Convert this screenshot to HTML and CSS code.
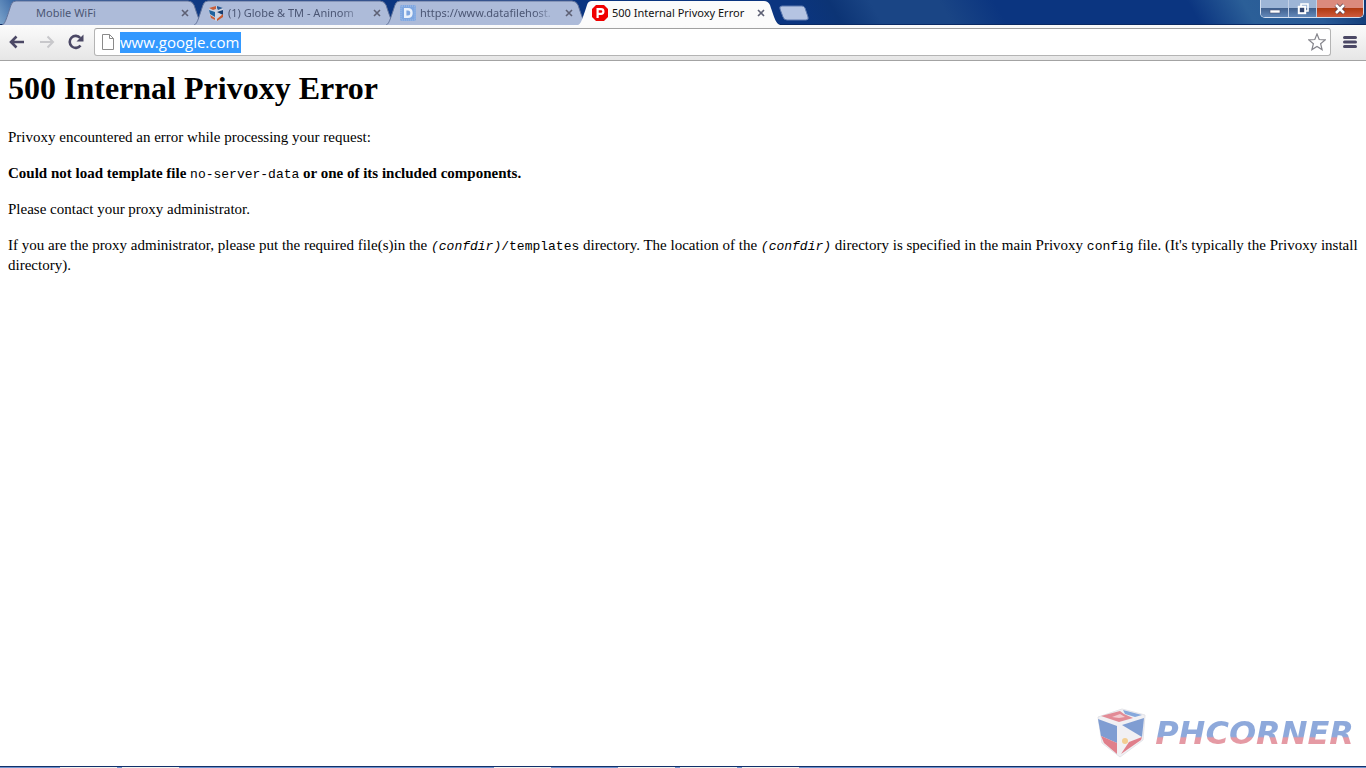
FILE: index.html
```
<!DOCTYPE html>
<html lang="en">
<head>
<meta charset="utf-8">
<title>500 Internal Privoxy Error</title>
<link rel="stylesheet" href="styles.css">
</head>
<body>
<div class="window">
  <header class="titlebar">
    <nav class="tabs" aria-label="Tabs">
      <div class="tab">
        <svg class="tab-shape" viewBox="0 0 202 25" preserveAspectRatio="none"><path d="M0 25C3 24 4 20 9 5Q10 1 14 1H186Q190 1 192 5C197 20 198 23 202 25"/></svg>
        <span class="favicon"></span>
        <span class="tab-title">Mobile WiFi</span>
        <button class="tab-close" aria-label="Close tab"><svg viewBox="0 0 8 8"><path d="M1 1L7 7M7 1L1 7"/></svg></button>
      </div>
      <div class="tab">
        <svg class="tab-shape" viewBox="0 0 202 25" preserveAspectRatio="none"><path d="M0 25C3 24 4 20 9 5Q10 1 14 1H186Q190 1 192 5C197 20 198 23 202 25"/></svg>
        <svg class="favicon" viewBox="0 0 16 16"><path fill="#ccd3e2" d="M1 3L8 1L15 3V11L8 16L2 12Z"/><path fill="#c75f3c" d="M1 3L8 1L8 4L5 5Z"/><path fill="#285994" d="M9 1L15 3L10 5L9 3Z"/><path fill="#1f639f" d="M1 5L7 7V12L2 9Z"/><path fill="#c75f3c" d="M2 10L7 13V15L3 13Z"/><path fill="#173e70" d="M9 7L15 5V10Z"/><path fill="#c8592e" d="M9 14L15 9V12L9 16Z"/></svg>
        <span class="tab-title fade">(1) Globe &amp; TM - Aninom</span>
        <button class="tab-close" aria-label="Close tab"><svg viewBox="0 0 8 8"><path d="M1 1L7 7M7 1L1 7"/></svg></button>
      </div>
      <div class="tab">
        <svg class="tab-shape" viewBox="0 0 202 25" preserveAspectRatio="none"><path d="M0 25C3 24 4 20 9 5Q10 1 14 1H186Q190 1 192 5C197 20 198 23 202 25"/></svg>
        <svg class="favicon" viewBox="0 0 16 16"><rect width="16" height="16" rx="2" fill="#7ea6e0"/><rect x="1" y="1" width="14" height="14" rx="1" fill="none" stroke="#a9c3ea" stroke-dasharray="1 1"/><path fill="none" stroke="#eaf1fb" stroke-width="2.4" d="M5.2 4.2H8Q11.5 4.2 11.5 8T8 11.8H5.2Z"/></svg>
        <span class="tab-title fade">https://www.datafilehost.</span>
        <button class="tab-close" aria-label="Close tab"><svg viewBox="0 0 8 8"><path d="M1 1L7 7M7 1L1 7"/></svg></button>
      </div>
      <div class="tab active">
        <svg class="tab-shape" viewBox="0 0 202 25" preserveAspectRatio="none"><path d="M0 25C3 24 4 20 9 5Q10 1 14 1H186Q190 1 192 5C197 20 198 23 202 25"/></svg>
        <svg class="favicon" viewBox="0 0 16 16"><path fill="#f00000" d="M4 0H12L16 4V12L12 16H4L0 12V4Z"/><path fill="none" stroke="#fff" stroke-width="2.2" d="M5.6 13V4.1H9Q11.4 4.1 11.4 6.4T9 8.8H6"/></svg>
        <span class="tab-title">500 Internal Privoxy Error</span>
        <button class="tab-close" aria-label="Close tab"><svg viewBox="0 0 8 8"><path d="M1 1L7 7M7 1L1 7"/></svg></button>
      </div>
    </nav>
    <button class="new-tab" aria-label="New tab"><svg viewBox="0 0 32 16"><path d="M4 1H24Q26 1 27 3L30 12Q31 15 28 15H9Q6 15 5 12L2 4Q1 1 4 1Z"/></svg></button>
    <div class="window-buttons">
      <button class="win" aria-label="Minimize"><svg viewBox="0 0 12 12"><rect x="1" y="7" width="10" height="3" fill="#fff" stroke="#4a5578" stroke-width=".6"/></svg></button>
      <button class="win" aria-label="Restore"><svg viewBox="0 0 12 12"><path fill="none" stroke="#fff" stroke-width="1.600" d="M4 3V1H11V8H9"/><rect x="1.800" y="3.800" width="6.400" height="6.400" fill="#34466f" stroke="#fff" stroke-width="2"/></svg></button>
      <button class="win win-close" aria-label="Close"><svg viewBox="0 0 12 12"><path stroke="#553a48" stroke-width="4" d="M2 2L10 10M10 2L2 10"/><path stroke="#fff" stroke-width="2.6" d="M2 2L10 10M10 2L2 10"/></svg></button>
    </div>
  </header>

  <div class="toolbar">
    <button class="tool" aria-label="Back"><svg viewBox="0 0 16 16"><path d="M15 8H2M7.500 2.500L2 8L7.500 13.500"/></svg></button>
    <button class="tool disabled" aria-label="Forward"><svg viewBox="0 0 16 16"><path d="M1 8H14M8.500 2.500L14 8L8.500 13.500"/></svg></button>
    <button class="tool" aria-label="Reload"><svg viewBox="0 0 16 16"><path d="M12.500 11.500A6 6 0 1 1 12.300 4"/><path class="solid" d="M15.500 0.500V7.500H8.500Z"/></svg></button>
    <div class="omnibox">
      <svg class="page-icon" viewBox="0 0 12 16"><path d="M.5 .5H7.500L11.500 4.500V15.500H.5ZM7.500 .5V4.500H11.500"/></svg>
      <input class="url" type="text" value="www.google.com" aria-label="Address">
      <button class="star" aria-label="Bookmark this page"><svg viewBox="0 0 18 18"><path d="M9 1L11.200 6.500L17.200 6.900L12.600 10.700L14.100 16.600L9 13.400L3.900 16.600L5.400 10.700L.8 6.900L6.800 6.500Z"/></svg></button>
    </div>
    <button class="menu" aria-label="Menu"><svg viewBox="0 0 14 14"><path d="M1.500 2.500H12.500M1.500 7H12.500M1.500 11.500H12.500"/></svg></button>
  </div>

  <main class="page">
    <h1>500 Internal Privoxy Error</h1>
    <p>Privoxy encountered an error while processing your request:</p>
    <p><b>Could not load template file <code>no-server-data</code> or one of its included components.</b></p>
    <p>Please contact your proxy administrator.</p>
    <p>If you are the proxy administrator, please put the required file(s)in the <code><i>(confdir)</i>/templates</code> directory. The location of the <code><i>(confdir)</i></code> directory is specified in the main Privoxy <code>config</code> file. (It's typically the Privoxy install directory).</p>
  </main>

  <div class="watermark">
    <svg class="cube" viewBox="0 0 50 50">
      <path fill="#f1f0f3" stroke="#e4e4e9" d="M1 9L25 1L48 7L46 32L23 49L5 35Z"/>
      <path fill="#e28b96" d="M4 8L23 3L27 6L36 10L22 14Z"/>
      <path fill="#f3cdd2" d="M15 9L23 6L28 9L22 10Z"/>
      <path fill="#86a8dc" d="M26 2L45 7L38 9L28 6Z"/>
      <path fill="#7f9dd2" d="M1 11L20 18L20 35L4 28Z"/>
      <path fill="#e07f8b" d="M4 28L20 35V46L7 35Z"/>
      <path fill="#7f9dd2" d="M25 17L47 10L45 29Z"/>
      <path fill="#e07f8b" d="M24 46L32 34L45 29L44 32Z"/>
      <circle cx="28" cy="33" r="3" fill="#f3ce92"/>
    </svg>
    <span class="brand">PHCORNER</span>
  </div>

  <footer class="taskbar">
    <span class="task"></span><span class="task"></span><span class="task gap-before"></span><span class="task gap-small"></span><span class="task"></span><span class="task"></span>
  </footer>
</div>
</body>
</html>
```
FILE: styles.css
```
* { box-sizing: border-box; }
body { margin: 0; background: #fff; }
button { padding: 0; border: 0; background: none; display: flex; align-items: center; justify-content: center; }
svg { display: block; flex: none; }

.window { display: flex; flex-direction: column; min-height: 100vh; }

.titlebar {
  display: flex;
  height: 25px;
  padding-left: 2px;
  border-bottom: 1px solid #0b2a63;
  background: linear-gradient(60deg, #7ba3cb 0, #2a5a9c 30px, #0b3580 200px, #0b3580 58%, #0c3475 61%, #1a4585 64%, #1a4585 69%, #0b3580 73%, #0b3580 87%, #2b5f98 91%, #285a97 96%, #0f3773);
}
.tabs { display: flex; height: 25px; }
.tab {
  position: relative;
  display: flex;
  align-items: center;
  width: 202px;
  height: 25px;
  margin-right: -10px;
  padding: 0 14px;
  font: 11px/24px "Noto Sans", "Open Sans", sans-serif;
  color: #4b5674;
}
.tab-shape { position: absolute; inset: 0; width: 100%; height: 100%; fill: #adbbd9; stroke: #62739a; }
.favicon, .tab-title, .tab-close { position: relative; }
.favicon { width: 16px; height: 16px; flex: none; }
.tab-title { flex: 1; min-width: 0; margin: 0 8px 0 4px; overflow: hidden; white-space: nowrap; }
.fade { mask-image: linear-gradient(to right, #000 84%, transparent); }
.tab-close { width: 10px; height: 16px; }
.tab-close svg { width: 8px; height: 8px; stroke: #5d6074; stroke-width: 1.600; }
.active { z-index: 1; color: #111; }
.active .tab-shape { fill: #fbfbfb; stroke: none; }
.new-tab { width: 32px; height: 25px; margin-left: 8px; }
.new-tab svg { width: 32px; height: 16px; fill: #b5c4e2; stroke: #5c79ae; }

.window-buttons {
  display: flex;
  height: 18px;
  margin: 0 2px 0 auto;
  border: 1px solid #d3dff0;
  border-top: 0;
  border-radius: 0 0 5px 5px;
  overflow: hidden;
}
.win { width: 28px; height: 17px; border-right: 1px solid #c3d0e6; background: linear-gradient(#9db5d6 0 45%, #41618f 50%, #6288b9); }
.win svg { width: 12px; height: 12px; }
.win-close { width: 46px; border: 0; background: linear-gradient(#db8a7d 0 45%, #b03a12 50%, #cf5a3c); }

.toolbar {
  display: flex;
  align-items: center;
  height: 36px;
  padding: 0 9px 1px 2px;
  border-bottom: 1px solid #a3a3a3;
  background: linear-gradient(#fbfbfb, #e6e6e6);
}
.tool { width: 30px; height: 28px; }
.tool + .tool { width: 29px; }
.tool svg { width: 16px; height: 16px; fill: none; stroke: #4b4865; stroke-width: 2.600; }
.tool .solid { fill: #4b4865; stroke: none; }
.disabled svg { stroke: #c8c8cb; stroke-width: 2; }
.omnibox {
  display: flex;
  align-items: center;
  flex: 1;
  height: 28px;
  margin-left: 4px;
  padding: 0 4px 0 7px;
  border: 1px solid #b4b4b4;
  border-top-color: #a0a0a0;
  border-radius: 3px;
  background: #fff;
}
.page-icon { width: 12px; height: 16px; margin-right: 6px; fill: #fff; stroke: #8a8a8a; }
.url {
  width: 121px;
  height: 21px;
  padding: 0;
  border: 0;
  background: #3399ff;
  color: #fff;
  font: 15px/20px "Open Sans", "Noto Sans", sans-serif;
}
.star { width: 18px; height: 20px; margin-left: auto; }
.star svg { width: 18px; height: 18px; fill: #fff; stroke: #85858c; stroke-width: 1.200; }
.menu { width: 14px; height: 20px; margin-left: 12px; }
.menu svg { width: 14px; height: 14px; stroke: #4b4865; stroke-width: 3; stroke-linecap: round; }

.page { flex: 1; padding: 8px 0 8px 8px; color: #000; font: 15px/20px "Liberation Serif", "Times New Roman", serif; }
.page h1 { margin: 0 0 20px; font-size: 32px; line-height: 38px; }
.page p { margin: 0 0 16px; }
.page code { font: 13px/16px "Liberation Mono", "Courier New", monospace; }

.watermark { display: flex; align-items: center; align-self: flex-end; gap: 8px; margin: 0 12px 8px 0; }
.cube { width: 50px; height: 50px; }
.brand {
  font: italic bold 32px/42px "DejaVu Sans", sans-serif;
  color: transparent;
  background: linear-gradient(#8ea9db 0 58%, #e59aa4 62%);
  background-clip: text;
}

.taskbar { display: flex; gap: 5px; height: 2px; padding-left: 60px; border-top: 1px solid #12306a; background: #6d92cf; }
.task { width: 57px; height: 1px; background: #f3f3ee; }
.gap-before { margin-left: 310px; }
.gap-small { margin-left: 62px; }
```
